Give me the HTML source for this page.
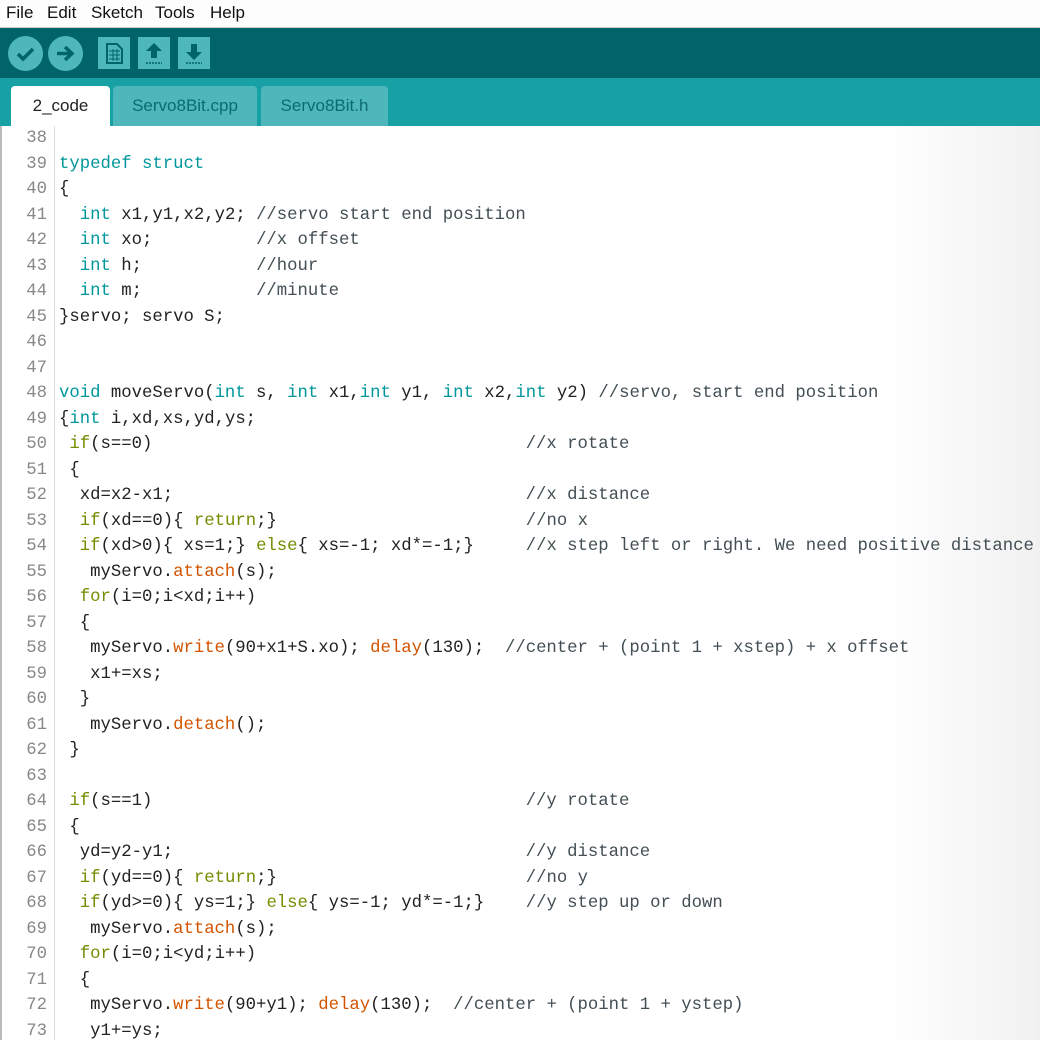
<!DOCTYPE html>
<html><head><style>
body{margin:0;width:1040px;height:1040px;overflow:hidden;background:#fff;font-family:"Liberation Sans",sans-serif;position:relative}
.menu{position:absolute;top:0;left:0;right:0;height:27px;background:#fdfdfd;border-bottom:1px solid #ccc;font-size:17px;color:#111}
.menu span{position:absolute;top:3px}
.tb{position:absolute;top:28px;left:0;right:0;height:50px;background:#006468}
.c{position:absolute;top:19px;width:35px;height:35px;border-radius:50%;background:#4db7bb}
.sq{position:absolute;top:9px;width:32px;height:32px;background:#4db7bb}
.tabs{position:absolute;top:78px;left:0;right:0;height:48px;background:#17a1a5}
.tab{position:absolute;top:8px;height:40px;background:#4db7bb;border-radius:4px 4px 0 0;color:#0b6c70;font-size:17px;text-align:center;line-height:40px}
.code{position:absolute;top:126px;left:0;right:0;bottom:0;border-left:2px solid #bbb;background:linear-gradient(90deg,#fff 85%,#f1f1f1)}
.gut{position:absolute;left:52px;top:0;bottom:0;border-left:1px solid #ddd}
pre{margin:0;position:absolute;top:0;font-family:"Liberation Mono",monospace;font-size:17.3px;line-height:25.5px;color:#222}
.ln{left:0;width:45px;text-align:right;color:#888}
.tx{left:57px}
.t{color:#00979c}.k{color:#728e00}.f{color:#d35400}.m{color:#434f54}
</style></head><body>
<div class="menu"><span style="left:6px">File</span><span style="left:47px">Edit</span><span style="left:91px">Sketch</span><span style="left:155px">Tools</span><span style="left:210px">Help</span></div>
<div class="tb">
<div class="c" style="left:8px;top:8px"><svg width="35" height="35"><path d="M10 18l5 5 10-10" stroke="#006468" stroke-width="3.5" fill="none"/></svg></div>
<div class="c" style="left:48px;top:8px"><svg width="35" height="35"><path d="M9 17.5h13M17 11l7 6.5-7 6.5" stroke="#006468" stroke-width="3.5" fill="none"/></svg></div>
<div class="sq" style="left:98px"><svg width="32" height="32"><path d="M9 7h10l5 5v14H9z" fill="none" stroke="#006468" stroke-width="2"/><path d="M11 14h11M11 18h11M11 22h11M15 12v12M19 12v12" stroke="#006468" stroke-width="1"/></svg></div>
<div class="sq" style="left:138px"><svg width="32" height="32"><path d="M16 6l8 8h-5v7h-6v-7H8z" fill="#006468"/><path d="M8 26h16" stroke="#006468" stroke-width="1.5" stroke-dasharray="2 1"/></svg></div>
<div class="sq" style="left:178px"><svg width="32" height="32"><path d="M16 23l8-8h-5V7h-6v8H8z" fill="#006468"/><path d="M8 26h16" stroke="#006468" stroke-width="1.5" stroke-dasharray="2 1"/></svg></div>
</div>
<div class="tabs">
<div class="tab" style="left:11px;width:99px;background:#fff;color:#222">2_code</div>
<div class="tab" style="left:113px;width:144px">Servo8Bit.cpp</div>
<div class="tab" style="left:261px;width:127px">Servo8Bit.h</div>
</div>
<div class="code"><div class="gut"></div>
<pre class="ln">38
39
40
41
42
43
44
45
46
47
48
49
50
51
52
53
54
55
56
57
58
59
60
61
62
63
64
65
66
67
68
69
70
71
72
73</pre>
<pre class="tx">

<span class="t">typedef</span> <span class="t">struct</span>
{
  <span class="t">int</span> x1,y1,x2,y2; <span class="m">//servo start end position</span>
  <span class="t">int</span> xo;          <span class="m">//x offset</span>
  <span class="t">int</span> h;           <span class="m">//hour</span>
  <span class="t">int</span> m;           <span class="m">//minute</span>
}servo; servo S;


<span class="t">void</span> moveServo(<span class="t">int</span> s, <span class="t">int</span> x1,<span class="t">int</span> y1, <span class="t">int</span> x2,<span class="t">int</span> y2) <span class="m">//servo, start end position</span>
{<span class="t">int</span> i,xd,xs,yd,ys;
 <span class="k">if</span>(s==0)                                    <span class="m">//x rotate</span>
 {
  xd=x2-x1;                                  <span class="m">//x distance</span>
  <span class="k">if</span>(xd==0){ <span class="k">return</span>;}                        <span class="m">//no x</span>
  <span class="k">if</span>(xd>0){ xs=1;} <span class="k">else</span>{ xs=-1; xd*=-1;}     <span class="m">//x step left or right. We need positive distance</span>
   myServo.<span class="f">attach</span>(s);
  <span class="k">for</span>(i=0;i&lt;xd;i++)
  {
   myServo.<span class="f">write</span>(90+x1+S.xo); <span class="f">delay</span>(130);  <span class="m">//center + (point 1 + xstep) + x offset</span>
   x1+=xs;
  }
   myServo.<span class="f">detach</span>();
 }

 <span class="k">if</span>(s==1)                                    <span class="m">//y rotate</span>
 {
  yd=y2-y1;                                  <span class="m">//y distance</span>
  <span class="k">if</span>(yd==0){ <span class="k">return</span>;}                        <span class="m">//no y</span>
  <span class="k">if</span>(yd>=0){ ys=1;} <span class="k">else</span>{ ys=-1; yd*=-1;}    <span class="m">//y step up or down</span>
   myServo.<span class="f">attach</span>(s);
  <span class="k">for</span>(i=0;i&lt;yd;i++)
  {
   myServo.<span class="f">write</span>(90+y1); <span class="f">delay</span>(130);  <span class="m">//center + (point 1 + ystep)</span>
   y1+=ys;</pre>
</div>
</body></html>
